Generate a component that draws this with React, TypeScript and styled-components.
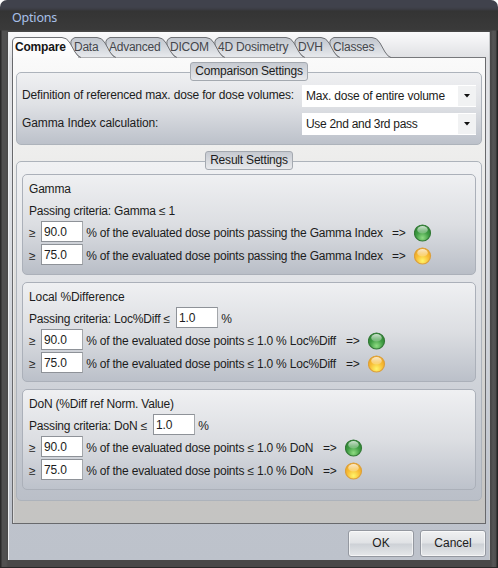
import React from "react";
import styled, { createGlobalStyle } from "styled-components";

const GlobalStyle = createGlobalStyle`
  * { box-sizing: border-box; }
  html, body { margin: 0; width: 498px; height: 568px; overflow: hidden; background: #fff; }
  body, button, input { font-family: "Liberation Sans", Arial, sans-serif; font-size: 12px; color: #1c1c20; }
`;

const Window = styled.main`
  width: 498px;
  height: 568px;
  display: flex;
  flex-direction: column;
  padding: 0 8px 8px;
  border-radius: 7px 7px 0 0;
  overflow: hidden;
  background:
    linear-gradient(#40424c 0 7px, #3c3d45 9px, #343434 11px, #3a3a3a 30px, transparent 31px) top / 100% 32px no-repeat,
    linear-gradient(to right, #2a2a2a 0 1px, #505050 2px 6px, #484848 8px 491px, #565656 493px, #4e4e4e 496px, #242424 497px);
  box-shadow: inset 0 -1px #282828;
`;

const TitleBar = styled.header`
  flex: none;
  height: 32px;
  padding: 9px 0 0 4px;
  font-family: "Noto Sans", sans-serif;
  font-size: 12.5px;
  line-height: 17px;
  letter-spacing: -0.2px;
  color: #a9c0e8;
`;

const Client = styled.div`
  flex: 1;
  display: flex;
  flex-direction: column;
  padding: 5px 3px 0;
  border-left: 1px solid #eceef0;
  border-right: 1px solid #c8cacc;
  background: linear-gradient(#fbfbfc 0, #dfe0e3 26px, #e2e4e8 120px, #bec3cc 470px, #bdc2cb);
`;

const TabStrip = styled.nav`
  flex: none;
  display: flex;
  height: 20px;
`;

const Tab = styled.div<{ $width: number; $pad: number; $spacing: number; $active?: boolean }>`
  position: relative;
  flex: none;
  width: ${(p) => p.$width}px;
  margin-right: -10px;
  padding-left: ${(p) => p.$pad}px;
  line-height: 20px;
  white-space: nowrap;
  letter-spacing: ${(p) => p.$spacing}px;
  font-weight: ${(p) => (p.$active ? 700 : 400)};
  color: ${(p) => (p.$active ? "#151515" : "#45474c")};
`;

const TabLabel = styled.span`
  position: relative;
  z-index: 20;
`;

const TabShape = styled.svg<{ $order: number }>`
  position: absolute;
  left: 0;
  top: 0;
  z-index: ${(p) => p.$order};
  overflow: visible;
`;

const Page = styled.section`
  flex: none;
  height: 467px;
  display: flex;
  flex-direction: column;
  padding: 5px 3px 0;
  border: 1px solid #68696c;
  border-top-color: #77787b;
  background: linear-gradient(#fafafa, #eeeeed 90px, #c5c4c2 445px, #c4c4c2);
  box-shadow: inset 1px 0 rgba(255, 255, 255, 0.4);
`;

const Group = styled.section<{ $height: number; $tone: string }>`
  flex: none;
  position: relative;
  height: ${(p) => p.$height}px;
  padding: 0 5px;
  border: 1px solid #adb3bb;
  border-radius: 5px;
  background: ${(p) => p.$tone};
`;

const GroupStack = styled.div<{ $height: number }>`
  flex: none;
  height: ${(p) => p.$height}px;
  padding-top: 9px;
`;

const Legend = styled.h2<{ $width: number }>`
  position: absolute;
  top: -11px;
  left: 50%;
  width: ${(p) => p.$width}px;
  height: 19px;
  margin: 0 0 0 ${(p) => -p.$width / 2}px;
  border: 1px solid #a4a9b0;
  border-radius: 3px;
  background: linear-gradient(#c6cad1, #e8e9ec);
  font-size: 12px;
  font-weight: 400;
  line-height: 17px;
  letter-spacing: -0.2px;
  text-align: center;
  white-space: nowrap;
`;

const Settings = styled.div`
  padding-top: 12px;
`;

const SettingRow = styled.div`
  display: flex;
  height: 28px;
  justify-content: space-between;
`;

const Text = styled.span<{ $spacing?: number; $width?: number }>`
  flex: none;
  white-space: pre;
  line-height: 21px;
  letter-spacing: ${(p) => p.$spacing ?? -0.2}px;
  ${(p) => (p.$width ? `width: ${p.$width}px;` : "")}
`;

const Combo = styled.div`
  display: flex;
  width: 174px;
  height: 22px;
  padding-left: 4px;
  background: #fff;
`;

const ComboValue = styled(Text)`
  flex: 1;
  line-height: 23px;
`;

const ComboButton = styled.span`
  width: 18px;
  margin: 1px 0;
  display: grid;
  place-items: center;
  background: #f1f2f3;
`;

const Criteria = styled.section<{ $height: number; $tone: number }>`
  height: ${(p) => p.$height}px;
  margin-bottom: 7px;
  padding: 1px 6px 0;
  border: 1px solid #abb0b9;
  border-radius: 5px;
  background: linear-gradient(#eff0f2, #dcdee2 50%, ${(p) => ["#b9bec7", "#bbc0c9", "#bdc2cb"][p.$tone]});
`;

const Line = styled.div<{ $height?: number }>`
  display: flex;
  align-items: center;
  height: ${(p) => p.$height ?? 22}px;

  & > ${Text} {
    padding-top: 4px;
  }
`;

const NumberInput = styled.input`
  flex: none;
  width: 42px;
  height: 21px;
  padding: 1px 0 0 2px;
  border: 1px solid #8e9298;
  border-right-color: #a4a7ab;
  border-radius: 0;
  outline: none;
  background: #fff;
  letter-spacing: -0.15px;
`;

const LampSvg = styled.svg`
  flex: none;
  margin-top: 2px;
`;

const Footer = styled.footer`
  display: flex;
  justify-content: flex-end;
  gap: 6px;
  padding-top: 6px;
`;

const Button = styled.button`
  width: 66px;
  height: 27px;
  padding: 0;
  border: 1px solid #9498a0;
  border-radius: 3px;
  background: linear-gradient(#f0f1f2, #e0e2e5 48%, #cdd1d6 52%, #e6e8ea);
  box-shadow: inset 0 0 0 1px rgba(255, 255, 255, 0.6);
  line-height: 25px;
`;

const tabs = [
  { label: "Compare", width: 68, pad: 3, spacing: -0.2 },
  { label: "Data", width: 45, pad: 4, spacing: -0.25 },
  { label: "Advanced", width: 71, pad: 4, spacing: -0.25 },
  { label: "DICOM", width: 58, pad: 4, spacing: -0.25 },
  { label: "4D Dosimetry", width: 90, pad: 4, spacing: -0.2 },
  { label: "DVH", width: 45, pad: 4, spacing: -0.25 },
  { label: "Classes", width: 61, pad: 4, spacing: -0.2 },
];

function TabOutline({ width: w, order, active }: { width: number; order: number; active: boolean }) {
  const slope = `H${w - 18}Q${w - 13} .5 ${w - 10} 6L${w - 5} 15Q${w - 2} 20 ${w + 1} 20.5`;
  const d = active ? `M.5 21V5Q.5.5 5 .5${slope}` : `M10 20.5Q5 17 2 11Q-1.5 2.5 5 .5${slope}`;
  return (
    <TabShape $order={order} width={w + 4} height="21">
      <defs>
        <linearGradient id="tabFill" x2="0" y2="1">
          <stop stopColor="#c0c5cd" />
          <stop offset="1" stopColor="#e8eaed" />
        </linearGradient>
      </defs>
      <path d={d} fill={active ? "#fcfcfc" : "url(#tabFill)"} stroke="#707276" />
      {active && <rect x="1" y="19" width={w - 3} height="2" fill="#fbfbfb" />}
    </TabShape>
  );
}

function Lamp({ color }: { color: "green" | "amber" }) {
  const [rim, dark, mid, light] =
    color === "green"
      ? ["#347a37", "#2d8433", "#3f9c43", "#8fdc83"]
      : ["#dca03c", "#eda51f", "#f8bd35", "#fff56a"];
  return (
    <LampSvg width="18" height="18" viewBox="0 0 18 18">
      <defs>
        <radialGradient id={`body-${color}`} cx="0.5" cy="0.8" r="0.75">
          <stop stopColor={light} />
          <stop offset="0.55" stopColor={mid} />
          <stop offset="1" stopColor={dark} />
        </radialGradient>
        <linearGradient id={`gloss-${color}`} x2="0" y2="1">
          <stop stopColor="#fff" stopOpacity="0.75" />
          <stop offset="1" stopColor="#fff" stopOpacity="0.2" />
        </linearGradient>
      </defs>
      <circle cx="8.5" cy="9" r="8" fill={`url(#body-${color})`} stroke={rim} strokeWidth="1.2" />
      <ellipse cx="8.5" cy="5.8" rx="5.3" ry="3.7" fill={`url(#gloss-${color})`} />
    </LampSvg>
  );
}

function ThresholdRow({ value, text, width, color }: { value: string; text: string; width: number; color: "green" | "amber" }) {
  return (
    <Line $height={23}>
      <Text $width={12}>≥</Text>
      <NumberInput defaultValue={value} />
      <Text $width={width}>{" " + text}</Text>
      <Text $width={22}>{"=>"}</Text>
      <Lamp color={color} />
    </Line>
  );
}

export default function App() {
  return (
    <>
      <GlobalStyle />
      <Window>
        <TitleBar>Options</TitleBar>
        <Client>
          <TabStrip>
            {tabs.map((t, i) => (
              <Tab key={t.label} $width={t.width} $pad={t.pad} $spacing={t.spacing} $active={i === 0}>
                <TabOutline width={t.width} order={10 - i} active={i === 0} />
                <TabLabel>{t.label}</TabLabel>
              </Tab>
            ))}
          </TabStrip>
          <Page>
            <GroupStack $height={98}>
              <Group $height={73} $tone="linear-gradient(#eff0f2, #dfe1e5 45%, #bcc1ca)">
                <Legend $width={118}>Comparison Settings</Legend>
                <Settings>
                  <SettingRow>
                    <Text $spacing={-0.17}>Definition of referenced max. dose for dose volumes:</Text>
                    <Combo>
                      <ComboValue>Max. dose of entire volume</ComboValue>
                      <ComboButton><svg width="6" height="4"><path d="M0 0H6L3 3.5Z" fill="#111" /></svg></ComboButton>
                    </Combo>
                  </SettingRow>
                  <SettingRow>
                    <Text $spacing={-0.1}>Gamma Index calculation:</Text>
                    <Combo>
                      <ComboValue $spacing={-0.3}>Use 2nd and 3rd pass</ComboValue>
                      <ComboButton><svg width="6" height="4"><path d="M0 0H6L3 3.5Z" fill="#111" /></svg></ComboButton>
                    </Combo>
                  </SettingRow>
                </Settings>
              </Group>
            </GroupStack>
            <Group $height={340} $tone="linear-gradient(#f0f1f3, #dfe1e5 40%, #babfc8)">
              <Legend $width={88}>Result Settings</Legend>
              <Settings>
                <Criteria $height={101} $tone={0}>
                  <Line>
                    <Text>Gamma</Text>
                  </Line>
                  <Line>
                    <Text>Passing criteria: Gamma ≤ 1</Text>
                  </Line>
                  <ThresholdRow value="90.0" text="% of the evaluated dose points passing the Gamma Index" width={309} color="green" />
                  <ThresholdRow value="75.0" text="% of the evaluated dose points passing the Gamma Index" width={309} color="amber" />
                </Criteria>
                <Criteria $height={100} $tone={1}>
                  <Line>
                    <Text $spacing={-0.1}>Local %Difference</Text>
                  </Line>
                  <Line>
                    <Text $width={147}>Passing criteria: Loc%Diff ≤</Text>
                    <NumberInput defaultValue="1.0" />
                    <Text>{" %"}</Text>
                  </Line>
                  <ThresholdRow value="90.0" text="% of the evaluated dose points ≤ 1.0 % Loc%Diff" width={263} color="green" />
                  <ThresholdRow value="75.0" text="% of the evaluated dose points ≤ 1.0 % Loc%Diff" width={263} color="amber" />
                </Criteria>
                <Criteria $height={101} $tone={2}>
                  <Line>
                    <Text>DoN (%Diff ref Norm. Value)</Text>
                  </Line>
                  <Line>
                    <Text $width={124}>Passing criteria: DoN ≤</Text>
                    <NumberInput defaultValue="1.0" />
                    <Text>{" %"}</Text>
                  </Line>
                  <ThresholdRow value="90.0" text="% of the evaluated dose points ≤ 1.0 % DoN" width={240} color="green" />
                  <ThresholdRow value="75.0" text="% of the evaluated dose points ≤ 1.0 % DoN" width={240} color="amber" />
                </Criteria>
              </Settings>
            </Group>
          </Page>
          <Footer>
            <Button>OK</Button>
            <Button>Cancel</Button>
          </Footer>
        </Client>
      </Window>
    </>
  );
}
